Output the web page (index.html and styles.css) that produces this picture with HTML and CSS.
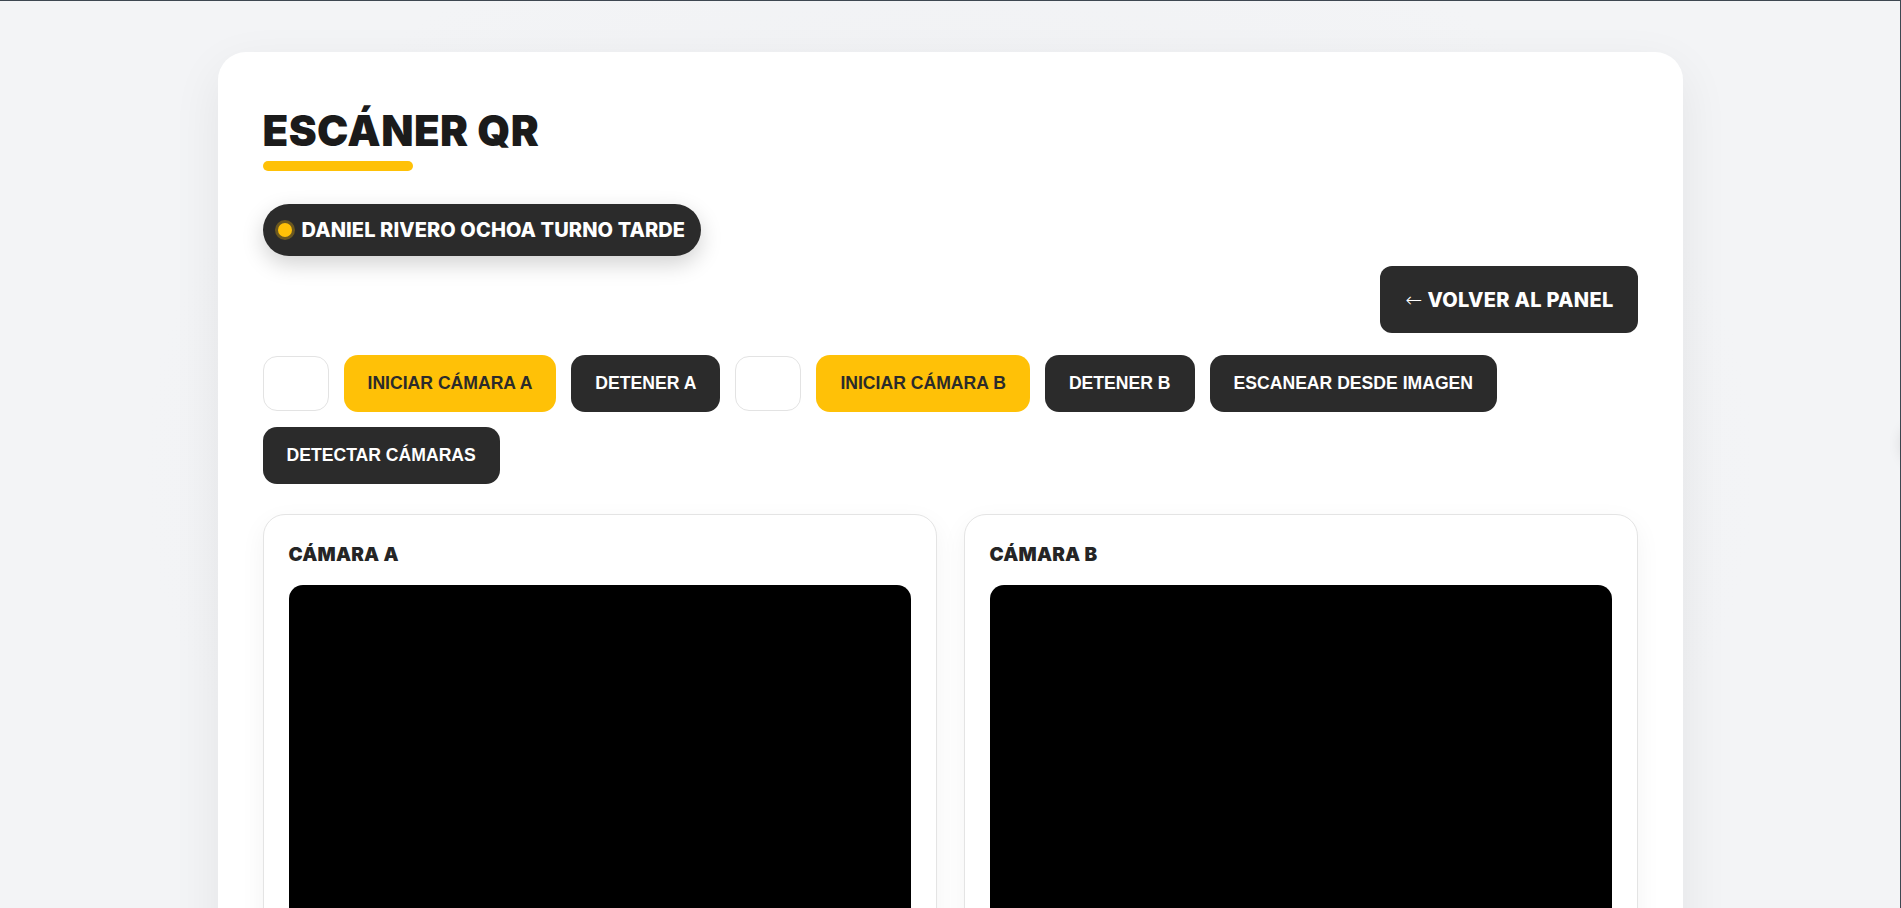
FILE: index.html
```html
<!DOCTYPE html>
<html lang="es">
<head>
<meta charset="utf-8">
<title>Escáner QR</title>
<link rel="stylesheet" href="styles.css">
</head>
<body>
<main class="card">
  <h1 class="title">ESCÁNER QR</h1>
  <div class="title-bar"></div>
  <div class="user-pill"><span class="dot"></span><span class="user-name">DANIEL RIVERO OCHOA TURNO TARDE</span></div>
  <div class="top-actions">
    <a class="btn-back" href="#"><span class="arrow">←</span>VOLVER AL PANEL</a>
  </div>
  <div class="toolbar">
    <span class="cam-select"></span>
    <button class="btn btn-yellow">INICIAR CÁMARA A</button>
    <button class="btn btn-dark">DETENER A</button>
    <span class="cam-select"></span>
    <button class="btn btn-yellow">INICIAR CÁMARA B</button>
    <button class="btn btn-dark">DETENER B</button>
    <button class="btn btn-dark">ESCANEAR DESDE IMAGEN</button>
    <button class="btn btn-dark">DETECTAR CÁMARAS</button>
  </div>
  <section class="cams">
    <div class="cam-panel">
      <h2 class="cam-title">CÁMARA A</h2>
      <div class="video"></div>
    </div>
    <div class="cam-panel">
      <h2 class="cam-title">CÁMARA B</h2>
      <div class="video"></div>
    </div>
  </section>
</main>
<div class="edge-float"></div>
</body>
</html>
```

FILE: styles.css
```css
html {
  border-top: 1px solid #3e4751;
  border-right: 1px solid #3e4751;
  background: #f3f4f6;
  scrollbar-width: none;
}
html::-webkit-scrollbar { display: none; }

body {
  margin: 0;
  padding: 51px 0 60px;
  background: radial-gradient(ellipse at 50% 40%, #eeeff2 0%, #f3f4f6 60%);
  font-family: "Inter", "Noto Sans", sans-serif;
  color: #1c1c1c;
}

.card {
  width: 1465px;
  box-sizing: border-box;
  margin: 0 auto;
  background: #ffffff;
  border-radius: 28px;
  padding: 55px 45px 45px;
  box-shadow: 0 16px 50px rgba(0, 0, 0, 0.07);
}

.title {
  margin: 0;
  font-size: 42px;
  line-height: 48px;
  font-weight: 900;
  letter-spacing: 0.4px;
  color: #1b1b1b;
}

.title-bar {
  width: 150px;
  height: 10px;
  margin-top: 6px;
  border-radius: 5px;
  background: #ffc107;
}

.user-pill {
  display: inline-flex;
  align-items: center;
  gap: 10px;
  margin-top: 33px;
  height: 52px;
  box-sizing: border-box;
  padding: 0 16px 0 15px;
  border-radius: 26px;
  background: #2b2b2b;
  color: #ffffff;
  font-size: 20px;
  font-weight: 800;
  letter-spacing: 0.1px;
  box-shadow: 0 8px 22px rgba(0, 0, 0, 0.18);
}

.dot {
  width: 14px;
  height: 14px;
  border-radius: 50%;
  background: #ffc107;
  box-shadow: 0 0 0 3px rgba(255, 193, 7, 0.3);
  flex: none;
}

.user-name { white-space: nowrap; }

.top-actions {
  display: flex;
  justify-content: flex-end;
  margin-top: 10px;
}

.btn-back {
  display: inline-flex;
  align-items: center;
  height: 67px;
  box-sizing: border-box;
  padding: 0 24px 0 25px;
  border-radius: 12px;
  background: #2b2b2b;
  color: #ffffff;
  text-decoration: none;
  font-size: 20px;
  font-weight: 800;
  letter-spacing: 0.3px;
}

.arrow {
  font-family: "DejaVu Sans", sans-serif;
  font-weight: 300;
  margin-right: 5px;
}

.toolbar {
  display: flex;
  flex-wrap: wrap;
  align-items: center;
  gap: 15px 15px;
  margin-top: 22px;
}

.cam-select {
  display: block;
  width: 66px;
  height: 55px;
  box-sizing: border-box;
  border: 1px solid #e3e3e3;
  border-radius: 14px;
  background: #ffffff;
}

.btn {
  height: 57px;
  box-sizing: border-box;
  padding: 0 24px;
  border: none;
  border-radius: 14px;
  font-family: "Liberation Sans", Arial, sans-serif;
  font-size: 17.6px;
  font-weight: 700;
  cursor: pointer;
}

.btn-yellow {
  background: #ffc107;
  color: #2b2b2b;
}

.btn-dark {
  background: #2b2b2b;
  color: #ffffff;
}

.cams {
  display: grid;
  grid-template-columns: 1fr 1fr;
  gap: 27px;
  margin-top: 30px;
}

.cam-panel {
  border: 1px solid #e4e4e4;
  border-radius: 22px;
  padding: 27px 25px 25px;
  background: #ffffff;
  box-shadow: 0 8px 26px rgba(0, 0, 0, 0.05);
}

.cam-title {
  margin: 0 0 17px;
  font-size: 19px;
  line-height: 26px;
  font-weight: 900;
  letter-spacing: 0.2px;
  color: #252525;
}

.video {
  height: 467px;
  border-radius: 14px;
  background: #000000;
}

.edge-float {
  position: fixed;
  right: -44px;
  top: 418px;
  width: 44px;
  height: 44px;
  border-radius: 50%;
  background: #f3f4f6;
  box-shadow: 0 4px 14px rgba(0, 0, 0, 0.12);
}
```
